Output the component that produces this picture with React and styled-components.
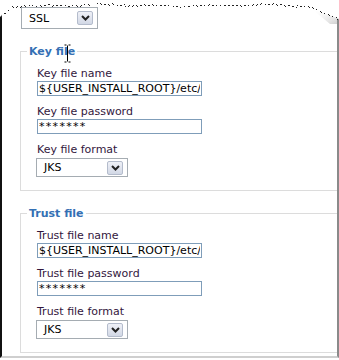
import React from 'react';
import styled, { createGlobalStyle } from 'styled-components';

const GlobalStyle = createGlobalStyle`
  html, body {
    margin: 0;
    padding: 0;
    background: #fff;
  }
  body {
    font-family: 'DejaVu Sans', Verdana, sans-serif;
    font-size: 11px;
  }
`;

const Page = styled.div`
  position: relative;
  width: 339px;
  height: 360px;
  overflow: hidden;
  background: #fff;
`;

const Sheet = styled.div`
  box-sizing: border-box;
  width: 339px;
  height: 358px;
  border-left: 2px solid #111;
  border-right: 2px solid #8a8a8a;
  border-bottom: 2px solid #cfcfcf;
  padding: 7px 0 0 19px;
  overflow: hidden;
`;

const Group = styled.fieldset`
  box-sizing: border-box;
  width: 340px;
  min-width: 0;
  margin: 16px 0 0 -1px;
  padding: 9px 0 13px 16px;
  border: 1px solid #dcdcdc;
`;

const Legend = styled.legend`
  margin-left: -10px;
  padding: 0 2px;
  font-weight: bold;
  line-height: 13px;
  color: #3470b4;
`;

const Fields = styled.div`
  display: flex;
  flex-direction: column;
  align-items: flex-start;
  gap: 9px;
`;

const Field = styled.div`
  display: flex;
  flex-direction: column;
  align-items: flex-start;
`;

const Label = styled.label`
  display: block;
  line-height: 13px;
  color: #33173d;
`;

const TextInput = styled.input`
  display: block;
  box-sizing: border-box;
  width: 165px;
  height: 15px;
  margin: 1px 0 0;
  padding: 0 1px;
  border: 1px solid #7f9db9;
  font: 11px 'DejaVu Sans', Verdana, sans-serif;
  letter-spacing: ${(p) => (p.$masked ? '1.3px' : '0')};
  color: #000;
  background: #fff;
  outline: none;
`;

const Select = styled.div`
  box-sizing: border-box;
  display: flex;
  align-items: center;
  justify-content: space-between;
  width: ${(p) => p.$width}px;
  height: ${(p) => p.$height}px;
  margin: ${(p) => (p.$inField ? '2px 0 0 -1px' : '0')};
  padding: 0 4px 0 7px;
  border: 1px solid #a5acb2;
  background: #fff;
  color: #000;
  line-height: 13px;
`;

const DropButton = styled.span`
  box-sizing: border-box;
  display: flex;
  align-items: center;
  justify-content: center;
  width: 16px;
  height: 14px;
  border: 1px solid #b4bccc;
  border-radius: 2px;
  background: linear-gradient(#eff1f7, #d2d8e5);
`;

const TornEdge = styled.svg`
  position: absolute;
  top: 0;
  left: 0;
`;

const Cursor = styled.svg`
  position: absolute;
  left: 63px;
  top: 44px;
`;

function Chevron() {
  return (
    <svg width="9" height="6" viewBox="0 0 9 6">
      <path d="M1 1 L4.5 4.5 L8 1" fill="none" stroke="#222" strokeWidth="2" />
    </svg>
  );
}

function Dropdown({ value, width, height, inField }) {
  return (
    <Select $width={width} $height={height} $inField={inField}>
      <span>{value}</span>
      <DropButton>
        <Chevron />
      </DropButton>
    </Select>
  );
}

function FileGroup({ title }) {
  return (
    <Group>
      <Legend>{title}</Legend>
      <Fields>
        <Field>
          <Label>{title} name</Label>
          <TextInput readOnly value="${USER_INSTALL_ROOT}/etc/DummyServerKeyFile.jks" />
        </Field>
        <Field>
          <Label>{title} password</Label>
          <TextInput readOnly $masked value="*******" />
        </Field>
        <Field>
          <Label>{title} format</Label>
          <Dropdown value="JKS" width={92} height={19} inField />
        </Field>
      </Fields>
    </Group>
  );
}

// ragged paper edge along the top of the capture
function edgeY(x) {
  let base;
  if (x < 14) base = 17 - x * 0.85;
  else if (x > 306) base = 5 + (x - 306) * 0.42;
  else base = 5 + Math.sin(x / 9) * 0.8 + Math.sin(x / 23) * 0.7;
  const j = Math.sin(x * 12.9898) * 43758.5453;
  return base + ((j - Math.floor(j)) - 0.5) * 1.6;
}

function Edge() {
  const pts = [];
  for (let x = 0; x <= 339; x += 1) pts.push([x, edgeY(x)]);
  const fill = 'M0 0 ' + pts.map(([x, y]) => `L${x} ${y.toFixed(1)}`).join(' ') + ' L339 0 Z';
  const dots = pts.filter(([x]) => {
    const h = Math.sin(x * 78.233) * 12345.678;
    return (x % 4 < 2) && (h - Math.floor(h)) > 0.2;
  });
  return (
    <TornEdge width="339" height="24" viewBox="0 0 339 24">
      <defs>
        <linearGradient id="corner" x1="0" y1="0" x2="1" y2="1">
          <stop offset="0" stopColor="#fff" stopOpacity="0" />
          <stop offset="1" stopColor="#bdbdbd" stopOpacity="0.7" />
        </linearGradient>
      </defs>
      <path d={fill} fill="#fff" />
      <path d="M312 9 L337 18 L337 24 L330 24 Z" fill="url(#corner)" />
      {dots.map(([x, y]) => (
        <rect key={x} x={x} y={Math.round(y)} width="1" height="1" fill="#222" />
      ))}
    </TornEdge>
  );
}

export default function App() {
  return (
    <>
      <GlobalStyle />
      <Page>
        <Sheet>
          <Dropdown value="SSL" width={77} height={22} />
          <FileGroup title="Key file" />
          <FileGroup title="Trust file" />
        </Sheet>
        <Edge />
        <Cursor width="9" height="19" viewBox="0 0 9 19">
          <path d="M1.5 1 H3.5 M5.5 1 H7.5 M4.5 1.5 V17.5 M1.5 18 H3.5 M5.5 18 H7.5" stroke="#000" strokeWidth="1" fill="none" />
        </Cursor>
      </Page>
    </>
  );
}
